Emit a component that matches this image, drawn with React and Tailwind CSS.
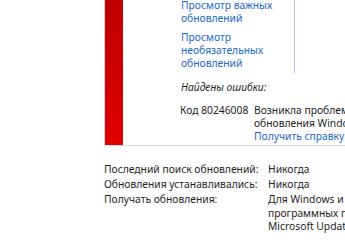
import React from 'react';

const LINKS = [
  ['Просмотр важных', 'обновлений'],
  ['Просмотр', 'необязательных', 'обновлений'],
];

const INFO = [
  { k: 'Последний поиск обновлений:', v: ['Никогда'] },
  { k: 'Обновления устанавливались:', v: ['Никогда'] },
  { k: 'Получать обновления:', v: ['Для Windows и других', 'программных продуктов от', 'Microsoft Update'] },
];

export default function App() {
  return (
    <div className="w-[345px] h-[240px] overflow-hidden bg-white text-[#1e1e1e] text-[10.3px] leading-[13px] font-['Noto_Sans',sans-serif]">
      {/* панель ошибки */}
      <div className="ml-[104px] w-[300px] h-[146px] flex border-l border-b border-[#d6d6d6]">
        <div className="w-[18px] shrink-0 bg-gradient-to-b from-[#bf0000] to-[#e00000]" />
        <div className="pl-[58px] flex flex-col">
          <div className="w-[114px] h-[74px] -mt-px border-r border-[#b6b6ea] flex flex-col gap-[6px] text-[#1a66cc]">
            {LINKS.map((l, i) => (
              <div key={i}>{l.map(t => <div key={t}>{t}</div>)}</div>
            ))}
          </div>
          <div className="mt-[8px] italic">Найдены ошибки:</div>
          <div className="mt-[10px] flex whitespace-nowrap">
            <div className="w-[74px] -ml-px">Код 80246008</div>
            <div>
              <div>Возникла проблема при поиске</div>
              <div>обновления Windows.</div>
              <div className="text-[#1a66cc]">Получить справку по этой ошибке</div>
            </div>
          </div>
        </div>
      </div>

      {/* сведения */}
      <div className="ml-[104px] mt-[17px] grid grid-cols-[164px_1fr] gap-y-[1.5px] leading-[13.5px] whitespace-nowrap">
        {INFO.map(r => (
          <React.Fragment key={r.k}>
            <div>{r.k}</div>
            <div>{r.v.map(t => <div key={t}>{t}</div>)}</div>
          </React.Fragment>
        ))}
      </div>
    </div>
  );
}
